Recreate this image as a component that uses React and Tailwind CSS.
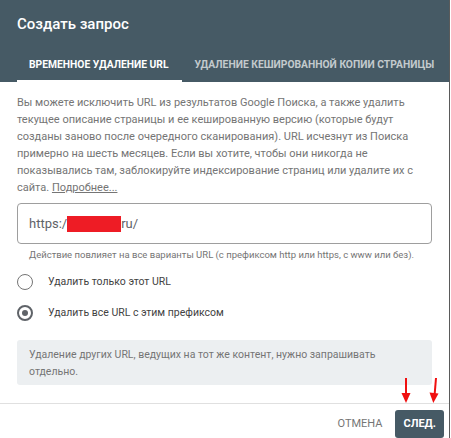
import React from "react";

function Radio({ checked }) {
  return checked ? (
    <div className="w-[16px] h-[16px] rounded-full border-2 border-[#5f6368] flex items-center justify-center shrink-0">
      <div className="w-[6px] h-[6px] rounded-full bg-[#5f6368]" />
    </div>
  ) : (
    <div className="w-[16px] h-[16px] rounded-full border-[1.5px] border-[#757575] shrink-0" />
  );
}

export default function App() {
  return (
    <div className="w-[451px] h-[438px] overflow-hidden bg-white flex font-['Roboto','Noto_Sans',sans-serif]">
      <div className="w-[449px] flex flex-col relative">
        <div className="h-[82px] bg-[#465a65] flex flex-col px-[17px] shrink-0">
          <div className="pt-[13px] text-[15px] leading-[22px] font-medium text-white">Создать запрос</div>
          <div className="mt-auto flex">
            <div className="h-[34px] flex items-center pl-[12px] pr-[13px] pt-[2px] border-b-2 border-white text-[10.3px] font-bold text-white uppercase whitespace-nowrap">
              Временное удаление URL
            </div>
            <div className="h-[34px] flex items-center pl-[13px] text-[10.3px] font-bold text-[#c3cacd] uppercase whitespace-nowrap">
              Удаление кешированной копии страницы
            </div>
          </div>
        </div>

        <div className="px-[17px] flex flex-col">
          <p className="mt-[12px] h-[102px] text-[11px] leading-[17px] text-[#757575] pr-[6px]">
            Вы можете исключить URL из результатов Google Поиска, а также удалить текущее описание страницы и ее кешированную версию (которые будут созданы заново после очередного сканирования). URL исчезнут из Поиска примерно на шесть месяцев. Если вы хотите, чтобы они никогда не показывались там, заблокируйте индексирование страниц или удалите их с сайта.{" "}
            <span className="underline">Подробнее...</span>
          </p>

          <div className="mt-[7px] h-[41px] w-[415px] border border-[#9e9e9e] rounded-[4px] flex items-center px-[11px] text-[13px] text-[#5f6368]">
            <span>https:/</span>
            <span className="inline-block w-[54px] h-[16px] bg-[#ee1c25]" />
            <span>ru/</span>
          </div>

          <div className="mt-[4px] pl-[12px] text-[9.5px] leading-[14px] text-[#757575] whitespace-nowrap">
            Действие повлияет на все варианты URL (с префиксом http или https, с www или без).
          </div>

          <div className="mt-[4px] h-[31px] flex items-center gap-[15px] text-[10.5px] text-[#424242]">
            <Radio />
            <span>Удалить только этот URL</span>
          </div>
          <div className="h-[31px] flex items-center gap-[15px] text-[10.5px] text-[#424242]">
            <Radio checked />
            <span>Удалить все URL с этим префиксом</span>
          </div>

          <div className="mt-[12px] h-[45px] w-[415px] bg-[#eceff1] rounded-[3px] px-[12px] pt-[6px] text-[10.5px] leading-[17px] text-[#757575]">
            Удаление других URL, ведущих на тот же контент, нужно запрашивать<br />отдельно.
          </div>
        </div>

        <div className="mt-[18px] border-t border-[#e0e0e0] flex justify-end items-center pt-[6px] pr-[5px] gap-[13px]">
          <span className="text-[11px] text-[#757575] uppercase">Отмена</span>
          <div className="h-[28px] px-[8px] bg-[#465a65] rounded-[3px] flex items-center text-[11px] font-bold text-white uppercase">
            След.
          </div>
        </div>

        <svg className="absolute left-[396px] top-[375px]" width="50" height="32" viewBox="0 0 50 32">
          <line x1="10" y1="3" x2="10" y2="20" stroke="#f01010" strokeWidth="2" />
          <polygon points="5.5,18 14.5,18 10,28" fill="#f01010" />
          <line x1="40" y1="3" x2="38.6" y2="20" stroke="#f01010" strokeWidth="2" />
          <polygon points="33.5,17.5 42.5,18.5 37.3,28" fill="#f01010" />
        </svg>
      </div>
      <div className="w-[1px] bg-[#5a5a5a]" />
      <div className="w-[1px] bg-white" />
    </div>
  );
}
